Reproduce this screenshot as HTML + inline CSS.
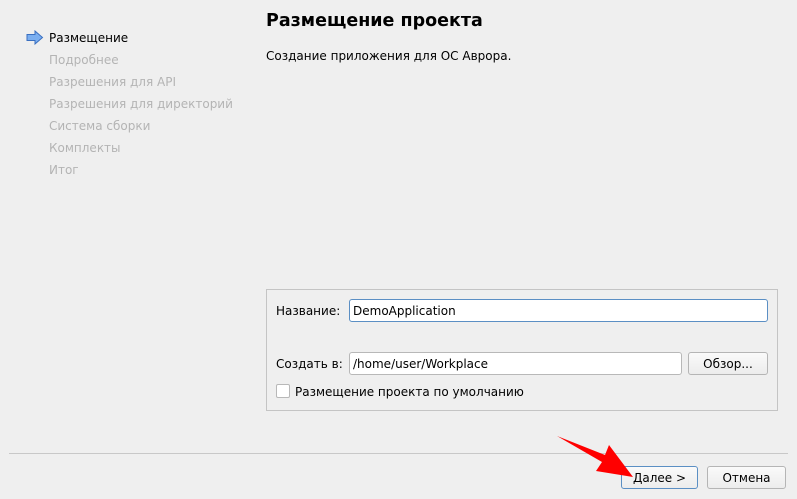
<!DOCTYPE html>
<html><head><style>
body{margin:0;width:797px;height:499px;background:#efefef;font-family:"DejaVu Sans","Liberation Sans",sans-serif;font-size:12px;color:#000;position:relative;overflow:hidden}
.a{position:absolute;white-space:nowrap}
.g{color:#b4b4b4}
.inp{position:absolute;background:#fff;border:1px solid #b8b8b8;border-radius:3px;box-sizing:border-box;padding:3px 3px 1px;line-height:16px}
.btn{position:absolute;box-sizing:border-box;border:1px solid #b5b5b5;border-radius:3px;background:linear-gradient(#fafafa,#ececec);text-align:center;line-height:22px}
</style></head><body>
<svg class="a" style="left:26px;top:30px" width="18" height="15" viewBox="0 0 18 15"><path d="M1 4.5h8V1l7.5 6.5L9 14v-3.5H1z" fill="#7aaef0" stroke="#3a6fc0" stroke-width="1"/></svg>
<div class="a" style="left:49px;top:31px">Размещение</div>
<div class="a g" style="left:49px;top:53px">Подробнее</div>
<div class="a g" style="left:49px;top:75px">Разрешения для API</div>
<div class="a g" style="left:49px;top:97px">Разрешения для директорий</div>
<div class="a g" style="left:49px;top:119px">Система сборки</div>
<div class="a g" style="left:49px;top:141px">Комплекты</div>
<div class="a g" style="left:49px;top:163px">Итог</div>
<div class="a" style="left:266px;top:11px;font-size:17.5px;font-weight:bold">Размещение проекта</div>
<div class="a" style="left:266px;top:49px">Создание приложения для ОС Аврора.</div>
<div class="a" style="left:266px;top:289px;width:512px;height:122px;border:1px solid #c4c4c4;box-sizing:border-box"></div>
<div class="a" style="left:276px;top:304px">Название:</div>
<div class="inp" style="left:349px;top:299px;width:419px;height:23px;border-color:#5b8fc4">DemoApplication</div>
<div class="a" style="left:276px;top:357px">Создать в:</div>
<div class="inp" style="left:349px;top:352px;width:333px;height:23px">/home/user/Workplace</div>
<div class="btn" style="left:688px;top:352px;width:80px;height:23px">Обзор...</div>
<div class="a" style="left:276px;top:384px;width:14px;height:14px;background:#fff;border:1px solid #b8b8b8;box-sizing:border-box;border-radius:2px"></div>
<div class="a" style="left:295px;top:385px">Размещение проекта по умолчанию</div>
<div class="a" style="left:9px;top:453px;width:779px;height:1px;background:#c8c8c8"></div>
<div class="btn" style="left:621px;top:466px;width:77px;height:23px;border-color:#5b8fc4"><u>Д</u>алее &gt;</div>
<div class="btn" style="left:707px;top:466px;width:79px;height:23px">Отмена</div>
<svg class="a" style="left:0;top:0" width="797" height="499"><path d="M557 436L605 455L609 445L633 477L596 471L602 462Z" fill="#ff0000"/></svg>
</body></html>
